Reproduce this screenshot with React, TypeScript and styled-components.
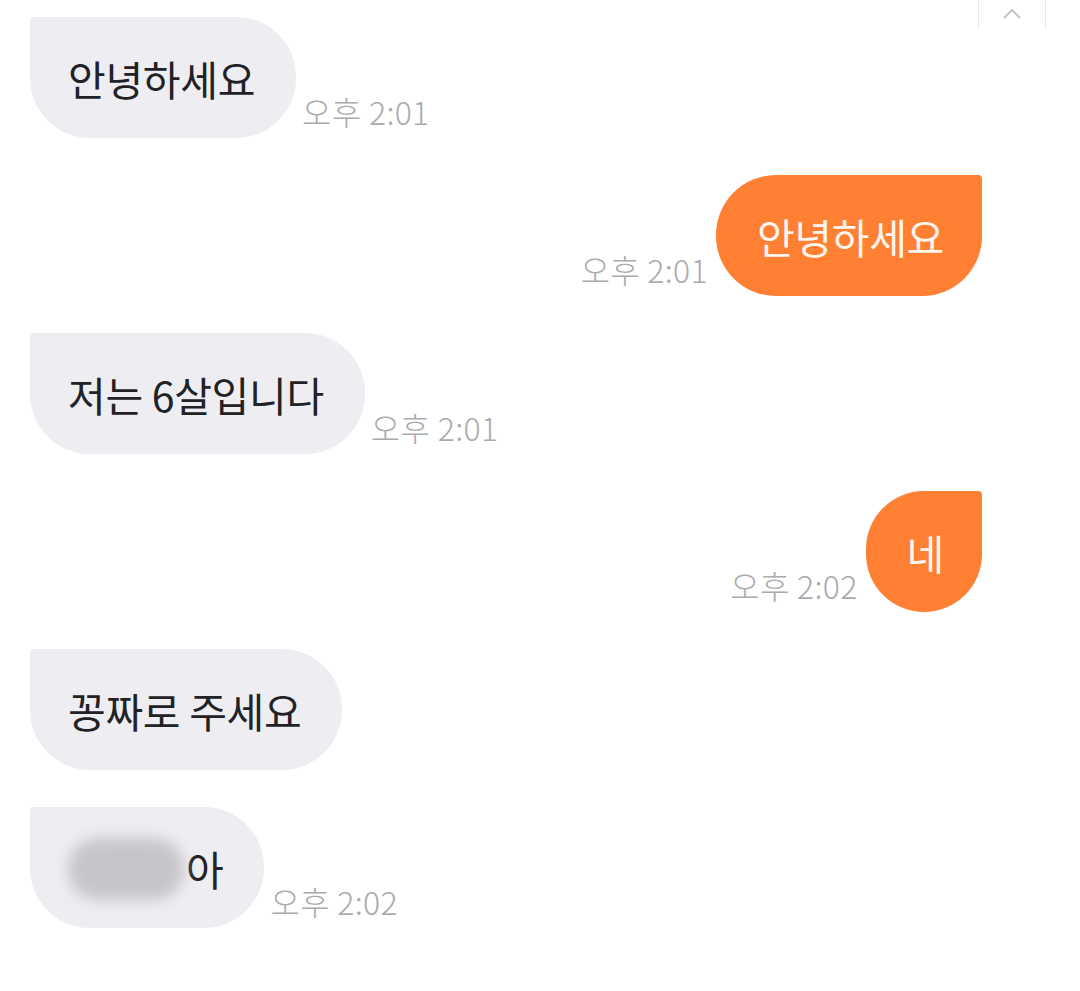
import React from "react";
import styled, { createGlobalStyle } from "styled-components";

const Global = createGlobalStyle`
  html, body { margin: 0; padding: 0; background: #ffffff; }
  body { font-family: "Noto Sans CJK KR", "Noto Sans", sans-serif; }
`;

const Page = styled.div`
  position: relative;
  width: 1080px;
  height: 991px;
  background: #ffffff;
  box-sizing: border-box;
  padding: 17px 98px 0 30px;
  display: flex;
  flex-direction: column;
  gap: 37px;
  overflow: hidden;
`;

const Row = styled.div<{ $out?: boolean }>`
  display: flex;
  flex-direction: ${(p) => (p.$out ? "row-reverse" : "row")};
  align-items: flex-end;
  gap: ${(p) => (p.$out ? "8px" : "6px")};
`;

const Bubble = styled.div<{ $out?: boolean }>`
  height: 121px;
  box-sizing: border-box;
  display: flex;
  align-items: center;
  padding: 2px ${(p) => (p.$out ? "38px" : "41px")} 0 ${(p) => (p.$out ? "41px" : "38px")};
  font-size: 41px;
  line-height: 1;
  letter-spacing: -0.3px;
  white-space: nowrap;
  color: ${(p) => (p.$out ? "#fff6ee" : "#222226")};
  background: ${(p) => (p.$out ? "#ff7f33" : "#eeeef2")};
  border-radius: ${(p) => (p.$out ? "60px 4px 60px 60px" : "4px 60px 60px 60px")};
`;

const Time = styled.span`
  font-size: 32px;
  font-weight: 300;
  line-height: 1;
  color: #ababaf;
  margin-bottom: 11px;
  white-space: nowrap;
  letter-spacing: 0.3px;
`;

const Blur = styled.span`
  display: inline-block;
  width: 116px;
  height: 62px;
  margin-right: 2px;
  border-radius: 30px;
  background: #c6c6ca;
  filter: blur(7px);
`;

const ScrollTop = styled.div`
  position: absolute;
  top: -2px;
  left: 978px;
  width: 66px;
  height: 30px;
  border-left: 1px solid #e6e6e6;
  border-right: 1px solid #e6e6e6;
  display: flex;
  align-items: center;
  justify-content: center;
`;

type Msg = { out?: boolean; text: React.ReactNode; time?: string };

const messages: Msg[] = [
  { text: "안녕하세요", time: "오후 2:01" },
  { out: true, text: "안녕하세요", time: "오후 2:01" },
  { text: "저는 6살입니다", time: "오후 2:01" },
  { out: true, text: "네", time: "오후 2:02" },
  { text: "꽁짜로 주세요" },
  {
    text: (
      <>
        <Blur />
        아
      </>
    ),
    time: "오후 2:02",
  },
];

export default function App() {
  return (
    <>
      <Global />
      <Page>
        <ScrollTop>
          <svg width="24" height="14" viewBox="0 0 24 14">
            <path d="M4 12 L12 4 L20 12" fill="none" stroke="#c4c4c4" strokeWidth="2" />
          </svg>
        </ScrollTop>
        {messages.map((m, i) => (
          <Row key={i} $out={m.out}>
            <Bubble $out={m.out}>{m.text}</Bubble>
            {m.time && <Time>{m.time}</Time>}
          </Row>
        ))}
      </Page>
    </>
  );
}
